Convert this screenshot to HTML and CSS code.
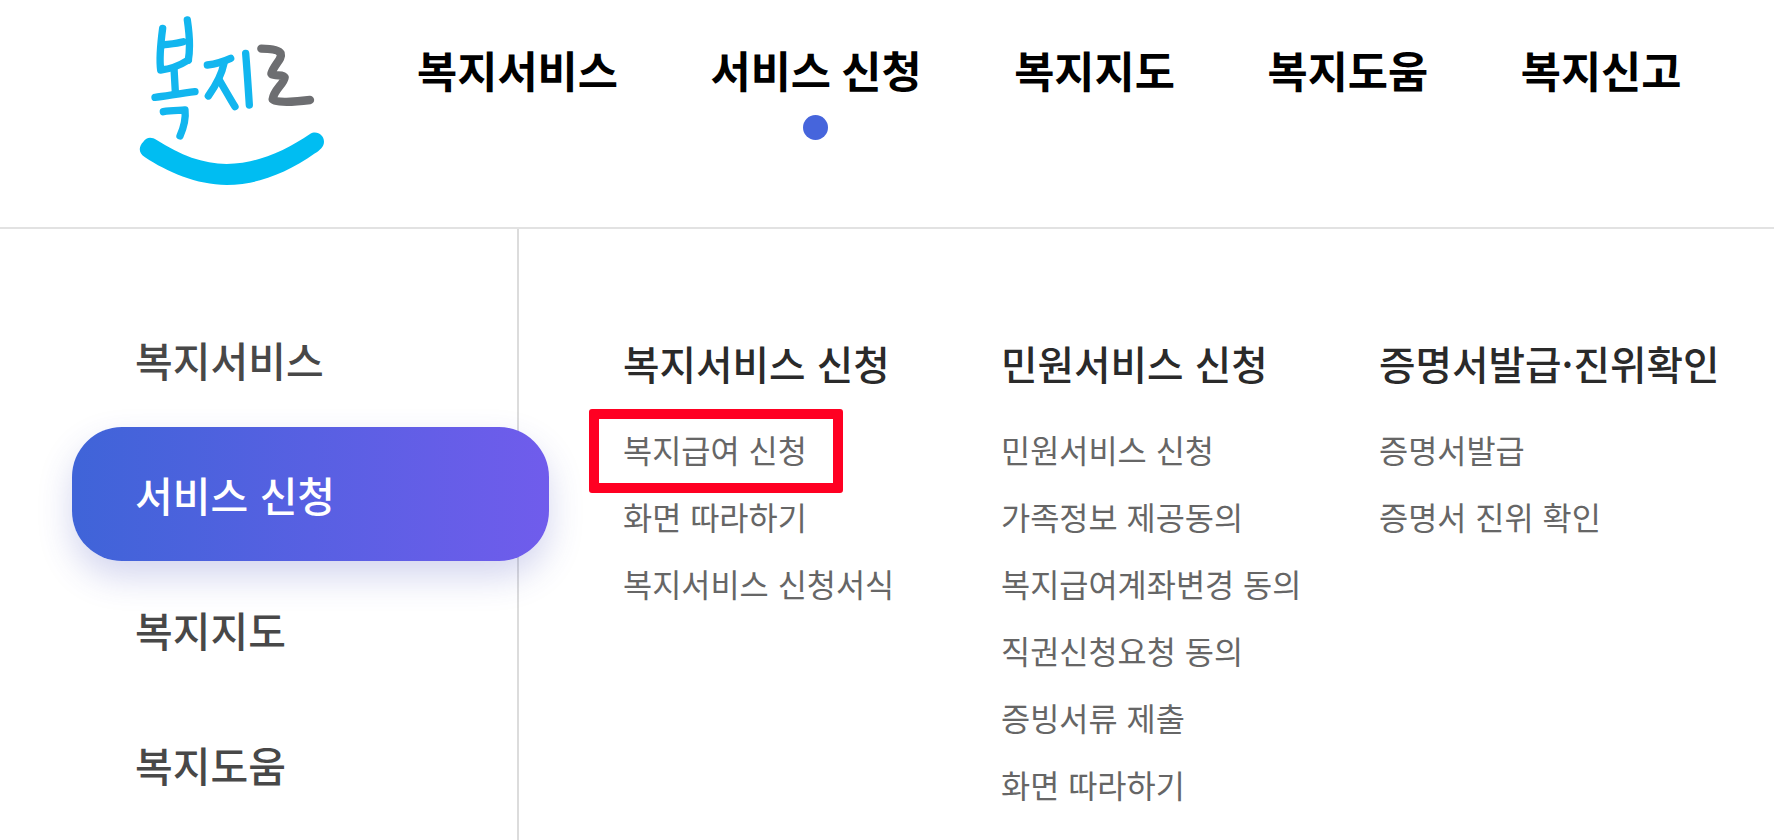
FILE: index.html
```html
<!DOCTYPE html>
<html lang="ko">
<head>
  <meta charset="UTF-8" />
  <title>복지로</title>
  <link rel="stylesheet" href="styles.css">
</head>
<body>
  <header class="top">
    <a class="logo" href="#" aria-label="복지로">
      <svg viewBox="0 0 900 690" width="300" height="230">
        <g fill="none" stroke="#12b6ef" stroke-width="22" stroke-linecap="round" stroke-linejoin="round">
          <path d="M188 85 C182 130 178 180 182 210 C205 208 240 196 265 180" />
          <path d="M262 60 C268 100 272 140 265 180" />
          <path d="M188 135 C210 132 232 130 250 125" />
          <path d="M222 205 L226 275" />
          <path d="M165 292 C190 290 240 280 285 275" />
          <path d="M190 335 C215 330 240 332 255 330 C258 355 250 385 240 408" />
          <path d="M322 195 C345 192 370 185 392 175" />
          <path d="M372 190 C365 225 345 260 325 288" />
          <path d="M358 240 C375 270 392 298 405 320" />
          <path d="M437 160 C442 220 445 270 448 315" />
        </g>
        <path d="M484 146 C505 146 535 148 542 160 C548 178 520 195 514 222 C525 230 550 222 554 232 C552 252 522 268 518 298 C520 310 590 305 630 300" fill="none" stroke="#6d6e71" stroke-width="25" stroke-linecap="round" stroke-linejoin="round" />
        <path d="M130 425 C140 410 155 410 170 420 C240 465 310 492 380 492 C470 492 560 450 630 402 C650 390 672 405 672 425 C672 440 660 450 645 460 C560 520 470 555 380 555 C290 555 200 515 135 472 C115 460 115 440 130 425 Z" fill="#00bdf2" />
      </svg>
    </a>
    <nav class="gnb">
      <a href="#">복지서비스</a>
      <a href="#" class="on">서비스 신청</a>
      <a href="#">복지지도</a>
      <a href="#">복지도움</a>
      <a href="#">복지신고</a>
    </nav>
  </header>

  <div class="menu">
    <ul class="side">
      <li>복지서비스</li>
      <li class="on">서비스 신청</li>
      <li>복지지도</li>
      <li>복지도움</li>
    </ul>

    <div class="cols">
      <section class="col">
        <h2>복지서비스 신청</h2>
        <a href="#" class="mark">복지급여 신청</a>
        <a href="#">화면 따라하기</a>
        <a href="#">복지서비스 신청서식</a>
      </section>
      <section class="col">
        <h2>민원서비스 신청</h2>
        <a href="#">민원서비스 신청</a>
        <a href="#">가족정보 제공동의</a>
        <a href="#">복지급여계좌변경 동의</a>
        <a href="#">직권신청요청 동의</a>
        <a href="#">증빙서류 제출</a>
        <a href="#">화면 따라하기</a>
      </section>
      <section class="col">
        <h2>증명서발급·진위확인</h2>
        <a href="#">증명서발급</a>
        <a href="#">증명서 진위 확인</a>
      </section>
    </div>
  </div>
</body>
</html>
```

FILE: styles.css
```css
html, body {
  margin: 0;
  padding: 0;
  height: 840px;
  overflow: hidden;
  background: #fff;
  font-family: "Noto Sans CJK KR", "Noto Sans", sans-serif;
}
a {
  color: inherit;
  text-decoration: none;
}
.top {
  display: flex;
  height: 227px;
  padding-left: 100px;
  border-bottom: 2px solid #e2e2e2;
}
.logo {
  display: block;
  width: 300px;
  height: 227px;
  overflow: hidden;
}
.logo svg {
  filter: blur(0.5px);
}
.gnb {
  display: flex;
  gap: 92.5px;
  margin-left: 17px;
  padding-top: 39px;
  font-size: 43.7px;
  font-weight: 700;
  word-spacing: -2px;
  line-height: 60px;
  color: #000;
}
.gnb a {
  position: relative;
  height: 60px;
  white-space: nowrap;
}
.gnb .on::after {
  content: "";
  position: absolute;
  left: 50%;
  top: 76px;
  width: 25px;
  height: 25px;
  margin-left: -13px;
  border-radius: 50%;
  background: #4665dc;
}
.menu {
  display: flex;
  height: 611px;
}
.side {
  flex: none;
  width: 517px;
  margin: 0;
  padding: 63px 0 0;
  list-style: none;
  border-right: 2px solid #dcdcdc;
}
.side li {
  display: flex;
  align-items: center;
  width: 477px;
  height: 134px;
  margin: 0 0 1px 72px;
  padding: 0 0 1px 63px;
  box-sizing: border-box;
  font-size: 41px;
  font-weight: 500;
  color: #484848;
  white-space: nowrap;
}
.side .on {
  position: relative;
  border-radius: 50px;
  background: linear-gradient(90deg, #3f64d8, #705cec);
  box-shadow: 0 16px 34px rgba(60, 70, 180, 0.22);
  color: #fff;
}
.cols {
  display: grid;
  grid-template-columns: repeat(3, 378px);
  padding: 105px 0 0 104px;
}
.col {
  display: flex;
  flex-direction: column;
  align-items: flex-start;
}
.col h2 {
  margin: 0 0 22px;
  height: 60px;
  font-size: 39.7px;
  font-weight: 500;
  line-height: 58px;
  color: #2a2a2a;
  white-space: nowrap;
}
.col a {
  position: relative;
  height: 67px;
  font-size: 31.7px;
  line-height: 67px;
  color: #666;
  white-space: nowrap;
}
.mark::after {
  content: "";
  position: absolute;
  left: -34px;
  top: -7px;
  width: 234px;
  height: 64px;
  border: 10px solid #ff0022;
  border-radius: 3px;
}
```
